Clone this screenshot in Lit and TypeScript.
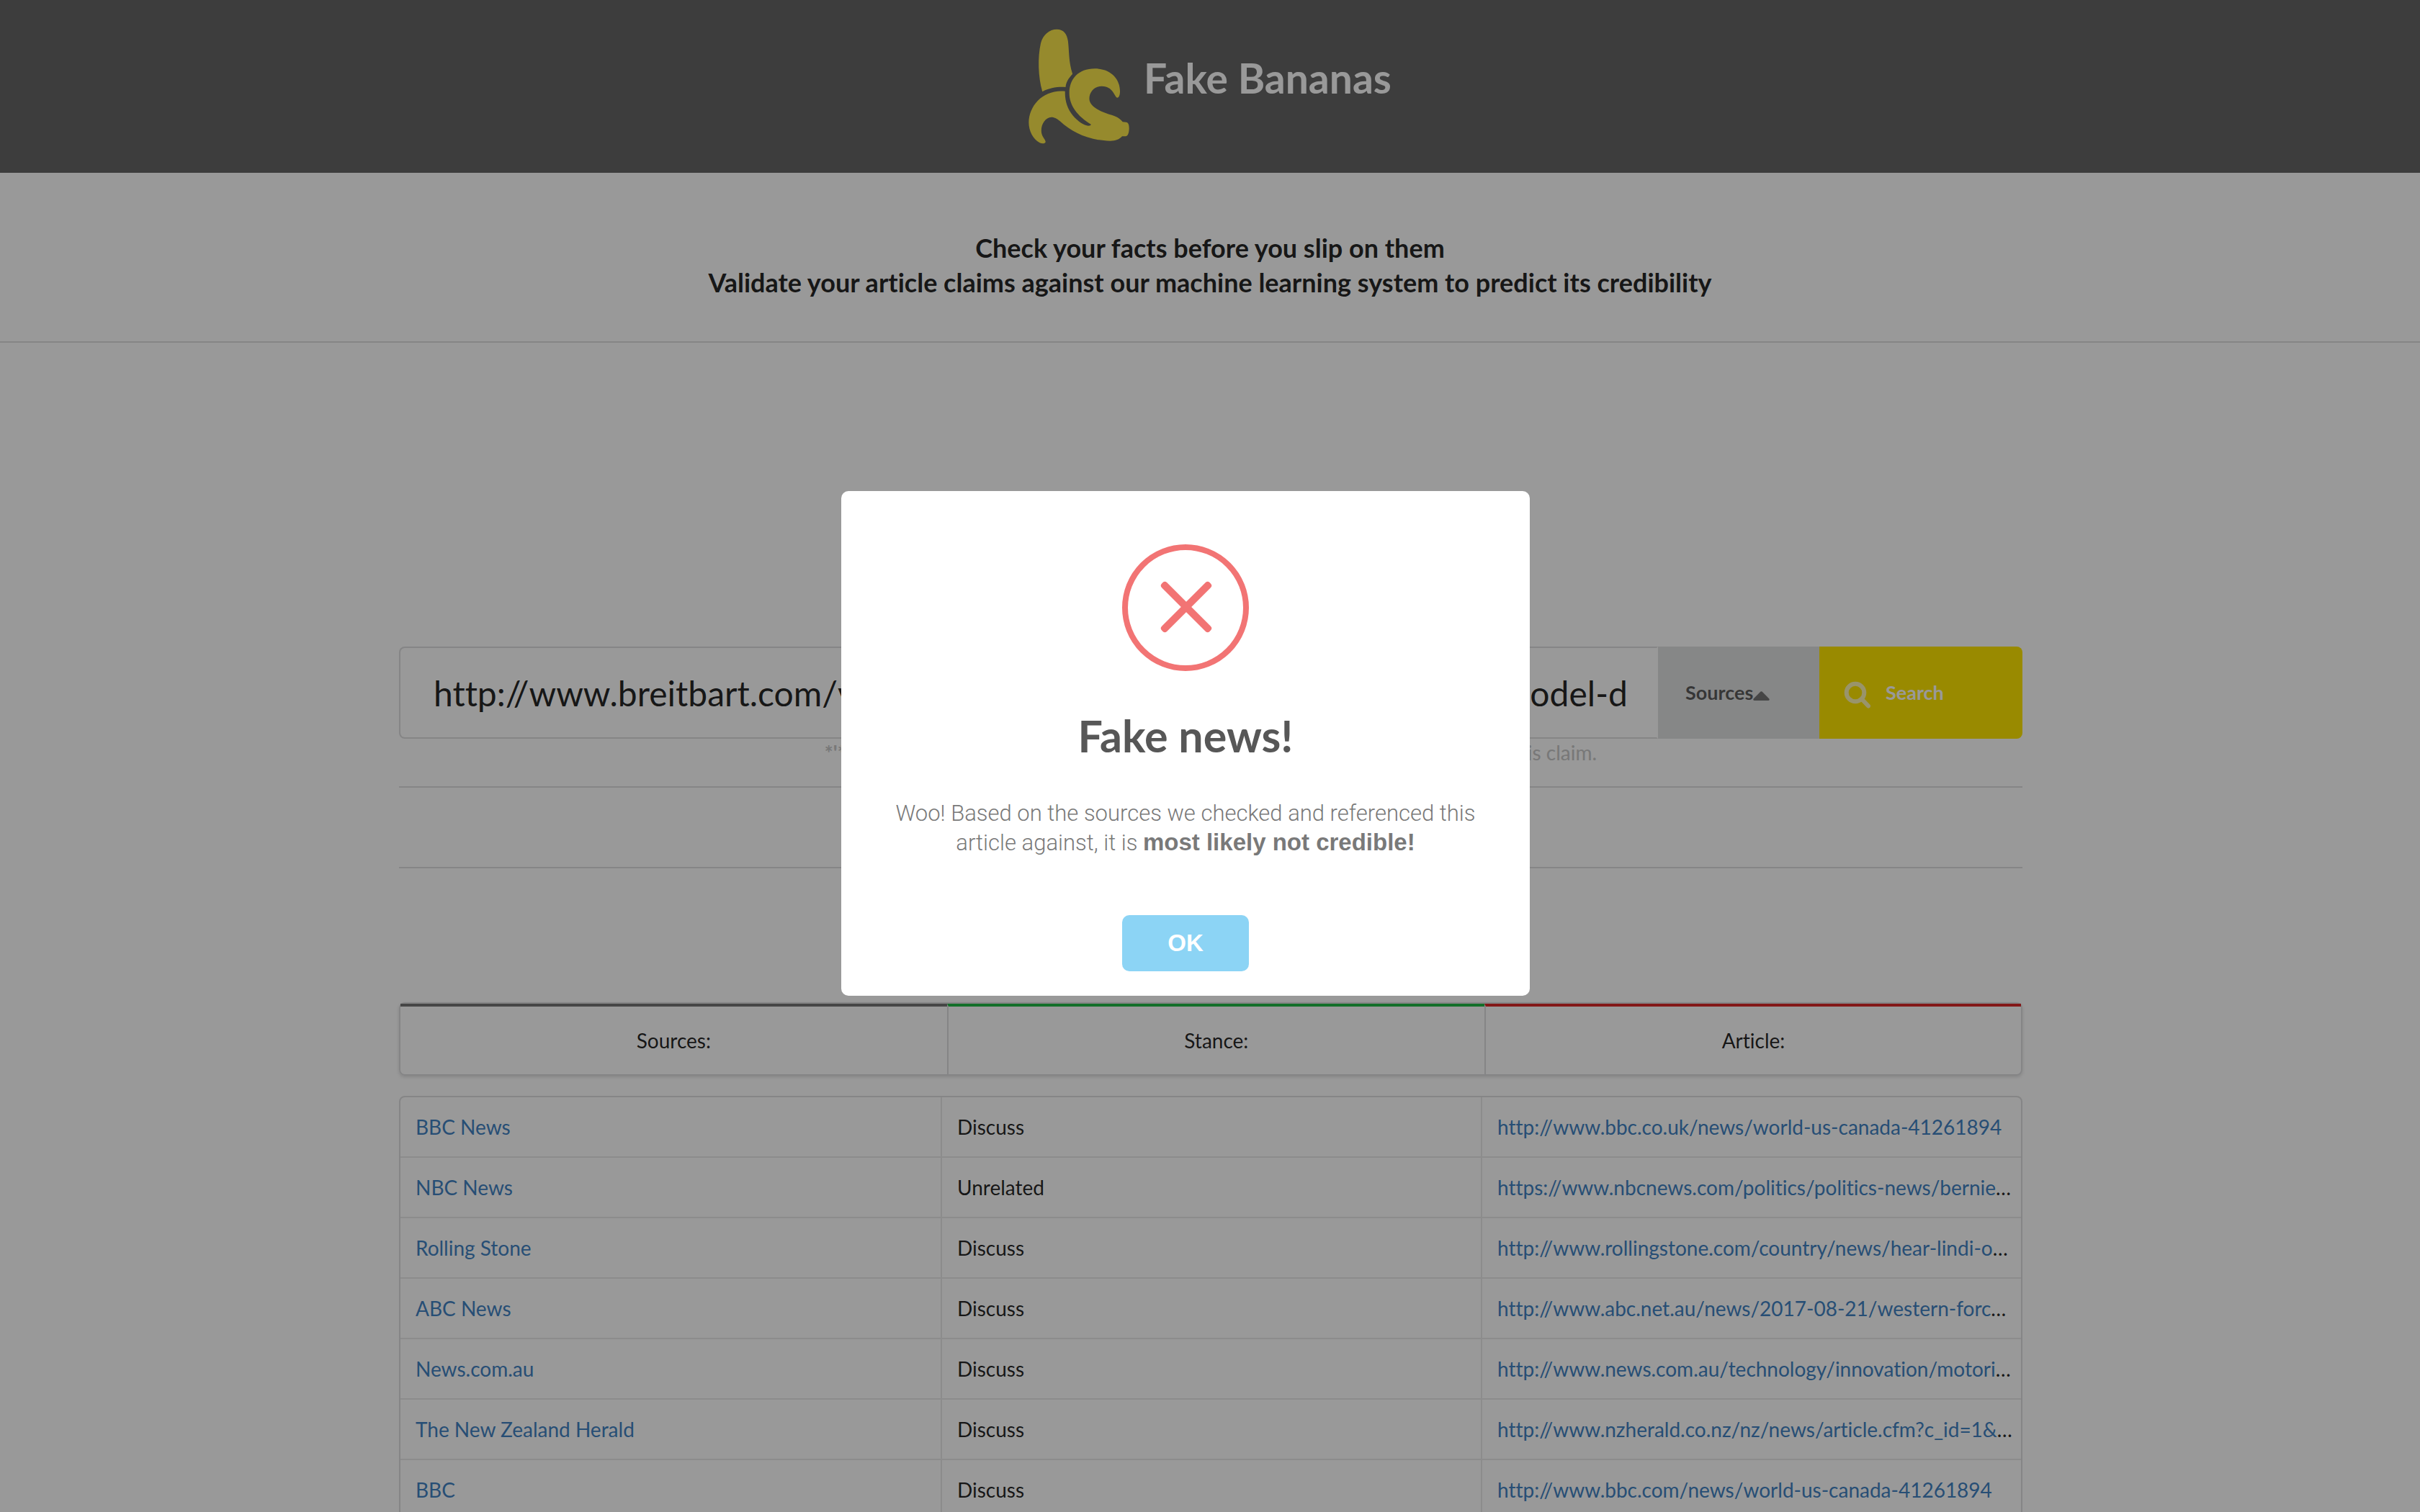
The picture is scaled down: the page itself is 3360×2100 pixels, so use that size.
import { LitElement, html, css } from "lit";
import { customElement, property, state } from "lit/decorators.js";

interface Result {
  source: string;
  stance: string;
  url: string;
}

const RESULTS: Result[] = [
  { source: "BBC News", stance: "Discuss", url: "http://www.bbc.co.uk/news/world-us-canada-41261894" },
  { source: "NBC News", stance: "Unrelated", url: "https://www.nbcnews.com/politics/politics-news/bernie-sanders-medicare-all" },
  { source: "Rolling Stone", stance: "Discuss", url: "http://www.rollingstone.com/country/news/hear-lindi-ortegas-new-song" },
  { source: "ABC News", stance: "Discuss", url: "http://www.abc.net.au/news/2017-08-21/western-force-decision/8826000" },
  { source: "News.com.au", stance: "Discuss", url: "http://www.news.com.au/technology/innovation/motoring/on-the-road" },
  { source: "The New Zealand Herald", stance: "Discuss", url: "http://www.nzherald.co.nz/nz/news/article.cfm?c_id=1&objectid=11920000" },
  { source: "BBC", stance: "Discuss", url: "http://www.bbc.com/news/world-us-canada-41261894" },
];

@customElement("site-header")
export class SiteHeader extends LitElement {
  static styles = css`
    :host {
      display: block;
    }
    .bar {
      display: flex;
      justify-content: center;
      align-items: flex-start;
      gap: 20px;
      padding: 40px;
      background: #666;
    }
    .logo {
      display: block;
      width: 140px;
      height: 160px;
      fill: #fbe64b;
    }
    .title {
      margin: 32px 0 0;
      font-size: 57px;
      line-height: 72px;
      font-weight: 700;
      color: #fff;
    }
    .tagline {
      margin: 0;
      padding: 80px 40px 58px;
      border-bottom: 2px solid #dededf;
      text-align: center;
      font-size: 36px;
      line-height: 48px;
      font-weight: 700;
    }
  `;

  render() {
    return html`
      <header class="bar">
        <svg class="logo" viewBox="76 120 378 480" preserveAspectRatio="none" aria-hidden="true">
          <path
            d="M128 382C112 320 110 240 122 180C130 144 155 122 182 122C208 122 220 142 224 170C229 215 226 255 241 308C226 326 217 342 215 363C185 361 155 366 128 382Z"
          />
          <path
            d="M310 518C260 485 229 440 229 388C229 330 262 286 325 286C385 286 419 330 419 380C419 398 414 407 409 407C398 405 394 358 350 359C322 360 304 384 304 412C304 445 350 468 390 480C410 487 422 497 429 508L442 509C451 510 454 522 453 540C452 556 448 567 440 568L427 568C417 581 402 587 382 587C300 585 240 552 194 505C182 492 170 488 162 488C140 489 124 515 124 545C124 570 141 580 140 592C137 600 126 599 118 595C92 578 77 545 77 510C78 440 130 372 213 380C212 420 222 455 243 482C262 507 285 522 300 524C308 524 311 520 310 518Z"
          />
        </svg>
        <h1 class="title">Fake Bananas</h1>
      </header>
      <h2 class="tagline">
        Check your facts before you slip on them<br />Validate your article claims against our machine
        learning system to predict its credibility
      </h2>
    `;
  }
}

@customElement("claim-search")
export class ClaimSearch extends LitElement {
  static styles = css`
    :host {
      display: block;
    }
    .row {
      display: flex;
      height: 128px;
    }
    .field {
      flex: 1;
      min-width: 0;
      box-sizing: border-box;
      margin: 0;
      padding: 0 42px 0 46px;
      border: 2px solid #dededf;
      border-right-color: transparent;
      border-radius: 8px 0 0 8px;
      outline: none;
      background: #fff;
      color: rgba(0, 0, 0, 0.87);
      font: inherit;
      font-size: 48px;
    }
    .button {
      display: flex;
      align-items: center;
      box-sizing: border-box;
      margin: 0;
      border: 0;
      font: inherit;
      font-size: 27px;
      font-weight: 700;
      cursor: pointer;
    }
    .sources {
      width: 224px;
      padding: 0 38px;
      background: #e0e1e2;
      color: rgba(0, 0, 0, 0.6);
    }
    .caret {
      width: 23px;
      height: 13px;
      margin-top: 8px;
      fill: #757575;
    }
    .search {
      gap: 20px;
      width: 282px;
      padding: 0 34px;
      border-radius: 0 8px 8px 0;
      background: #ffe600;
      color: #fff;
    }
    .glass {
      width: 38px;
      height: 38px;
      margin-top: 6px;
      fill: none;
      stroke: #fff;
      stroke-width: 6;
      stroke-linecap: round;
      opacity: 0.7;
    }
    .hint {
      margin: 0;
      text-align: center;
      color: #c8c8c8;
    }
  `;

  render() {
    return html`
      <form class="row" @submit=${(e: Event) => e.preventDefault()}>
        <input
          class="field"
          type="text"
          aria-label="Article address"
          aria-describedby="hint"
          .value=${"http://www.breitbart.com/video/2017/09/13/bernie-sanders-canada-model-delivers"}
        />
        <button class="button sources" type="button" aria-haspopup="true">
          Sources
          <svg class="caret" viewBox="0 0 23 13" aria-hidden="true">
            <path d="M10.5 0.6Q11.5 -0.3 12.5 0.6L22.4 10.6Q23.4 12.8 21 13L2 13Q-0.4 12.8 0.6 10.6Z" />
          </svg>
        </button>
        <button class="button search" type="submit">
          <svg class="glass" viewBox="0 0 38 38" aria-hidden="true">
            <circle cx="16" cy="16" r="12.3" />
            <path d="M25 25L34 34.5" />
          </svg>
          Search
        </button>
      </form>
      <p class="hint" id="hint">
        <b>*'*</b> Enter the link of an article and we check our sources to see if they support this claim.
      </p>
    `;
  }
}

@customElement("result-list")
export class ResultList extends LitElement {
  @property({ attribute: false }) results: Result[] = [];

  static styles = css`
    :host {
      display: block;
    }
    .heads {
      display: flex;
      margin-bottom: 28px;
      border: 2px solid #dededf;
      border-radius: 8px;
      box-shadow: 0 2px 4px rgba(34, 36, 38, 0.15);
    }
    .head {
      flex: 1 1 auto;
      padding: 28px;
      border-top: 4px solid #767676;
      text-align: center;
    }
    .head + .head {
      border-left: 2px solid #dededf;
    }
    .head.stance {
      border-top-color: #21ba45;
    }
    .head.article {
      border-top-color: #db2828;
    }
    .table {
      width: 100%;
      table-layout: fixed;
      border: 2px solid #dededf;
      border-radius: 8px;
      border-spacing: 0;
    }
    .cell {
      padding: 22px 9px 22px 21px;
      overflow: hidden;
      white-space: nowrap;
      text-overflow: ellipsis;
    }
    .cell + .cell {
      border-left: 2px solid #e9e9e9;
    }
    .line + .line .cell {
      border-top: 2px solid #e9e9e9;
    }
    .link {
      color: #4183c4;
      text-decoration: none;
    }
  `;

  render() {
    return html`
      <div class="heads">
        <div class="head">Sources:</div>
        <div class="head stance">Stance:</div>
        <div class="head article">Article:</div>
      </div>
      <table class="table" aria-label="Checked sources">
        <tbody>
          ${this.results.map(
            (r) => html`
              <tr class="line">
                <td class="cell"><a class="link" href=${new URL(r.url).origin}>${r.source}</a></td>
                <td class="cell">${r.stance}</td>
                <td class="cell"><a class="link" href=${r.url}>${r.url}</a></td>
              </tr>
            `
          )}
        </tbody>
      </table>
    `;
  }
}

@customElement("verdict-dialog")
export class VerdictDialog extends LitElement {
  static styles = css`
    .overlay {
      position: fixed;
      inset: 0;
      background: rgba(0, 0, 0, 0.4);
    }
    .modal {
      position: absolute;
      top: 50%;
      left: 50%;
      box-sizing: border-box;
      width: 956px;
      margin: -368px 0 0 -512px;
      padding: 74px 34px 34px;
      border: 0;
      border-radius: 10px;
      background: #fff;
      text-align: center;
    }
    .mark {
      display: block;
      width: 176px;
      height: 176px;
      margin: 0 auto 50px;
      fill: #f27474;
    }
    .ring {
      fill: none;
      stroke: #f27474;
      stroke-width: 8;
    }
    .heading {
      margin: 0 0 48px;
      font-size: 61px;
      line-height: 80px;
      font-weight: 700;
      color: #575757;
    }
    .message {
      margin: 0 0 80px;
      padding: 0 30px;
      font-family: Roboto, "Liberation Sans", sans-serif;
      font-size: 31px;
      line-height: 40px;
      font-weight: 300;
      color: #797979;
    }
    .strong {
      font-family: "Liberation Sans", Arial, sans-serif;
      font-size: 33px;
      font-weight: 700;
    }
    .ok {
      display: block;
      width: 176px;
      height: 78px;
      margin: 0 auto;
      padding: 0;
      border: 0;
      border-radius: 10px;
      background: #8cd4f5;
      color: #fff;
      font-family: "Liberation Sans", Arial, sans-serif;
      font-size: 33px;
      line-height: 38px;
      font-weight: 700;
      cursor: pointer;
    }
  `;

  render() {
    return html`
      <div class="overlay">
        <dialog class="modal" open aria-labelledby="heading">
          <svg class="mark" viewBox="0 0 176 176" aria-hidden="true">
            <circle class="ring" cx="88" cy="88" r="84" />
            <rect x="42" y="82" width="94" height="10" rx="4" transform="rotate(45 89 87)" />
            <rect x="42" y="82" width="94" height="10" rx="4" transform="rotate(-45 89 87)" />
          </svg>
          <h2 class="heading" id="heading">Fake news!</h2>
          <p class="message">
            Woo! Based on the sources we checked and referenced this article against, it is
            <b class="strong">most likely not credible!</b>
          </p>
          <button
            class="ok"
            type="button"
            @click=${() => this.dispatchEvent(new CustomEvent("dismiss", { bubbles: true }))}
          >
            OK
          </button>
        </dialog>
      </div>
    `;
  }
}

@customElement("app-root")
export class AppRoot extends LitElement {
  @state() private open = true;

  static styles = css`
    :host {
      display: block;
      height: 100vh;
      overflow: hidden;
      background: #fff;
      color: rgba(0, 0, 0, 0.87);
      font-family: Lato, "Helvetica Neue", Arial, sans-serif;
      font-size: 28px;
      font-variant-ligatures: none;
      line-height: 38px;
    }
    .container {
      max-width: 2254px;
      margin: 0 auto;
      padding: 422px 0 0 2px;
    }
    .rule {
      margin: 28px 0 0;
      border: 0;
      border-top: 2px solid #dededf;
    }
    .rule + .rule {
      margin: 110px 0 186px;
    }
  `;

  render() {
    return html`
      <site-header></site-header>
      <main class="container">
        <claim-search></claim-search>
        <hr class="rule" />
        <hr class="rule" />
        <result-list .results=${RESULTS}></result-list>
      </main>
      ${this.open ? html`<verdict-dialog @dismiss=${() => (this.open = false)}></verdict-dialog>` : null}
    `;
  }
}
